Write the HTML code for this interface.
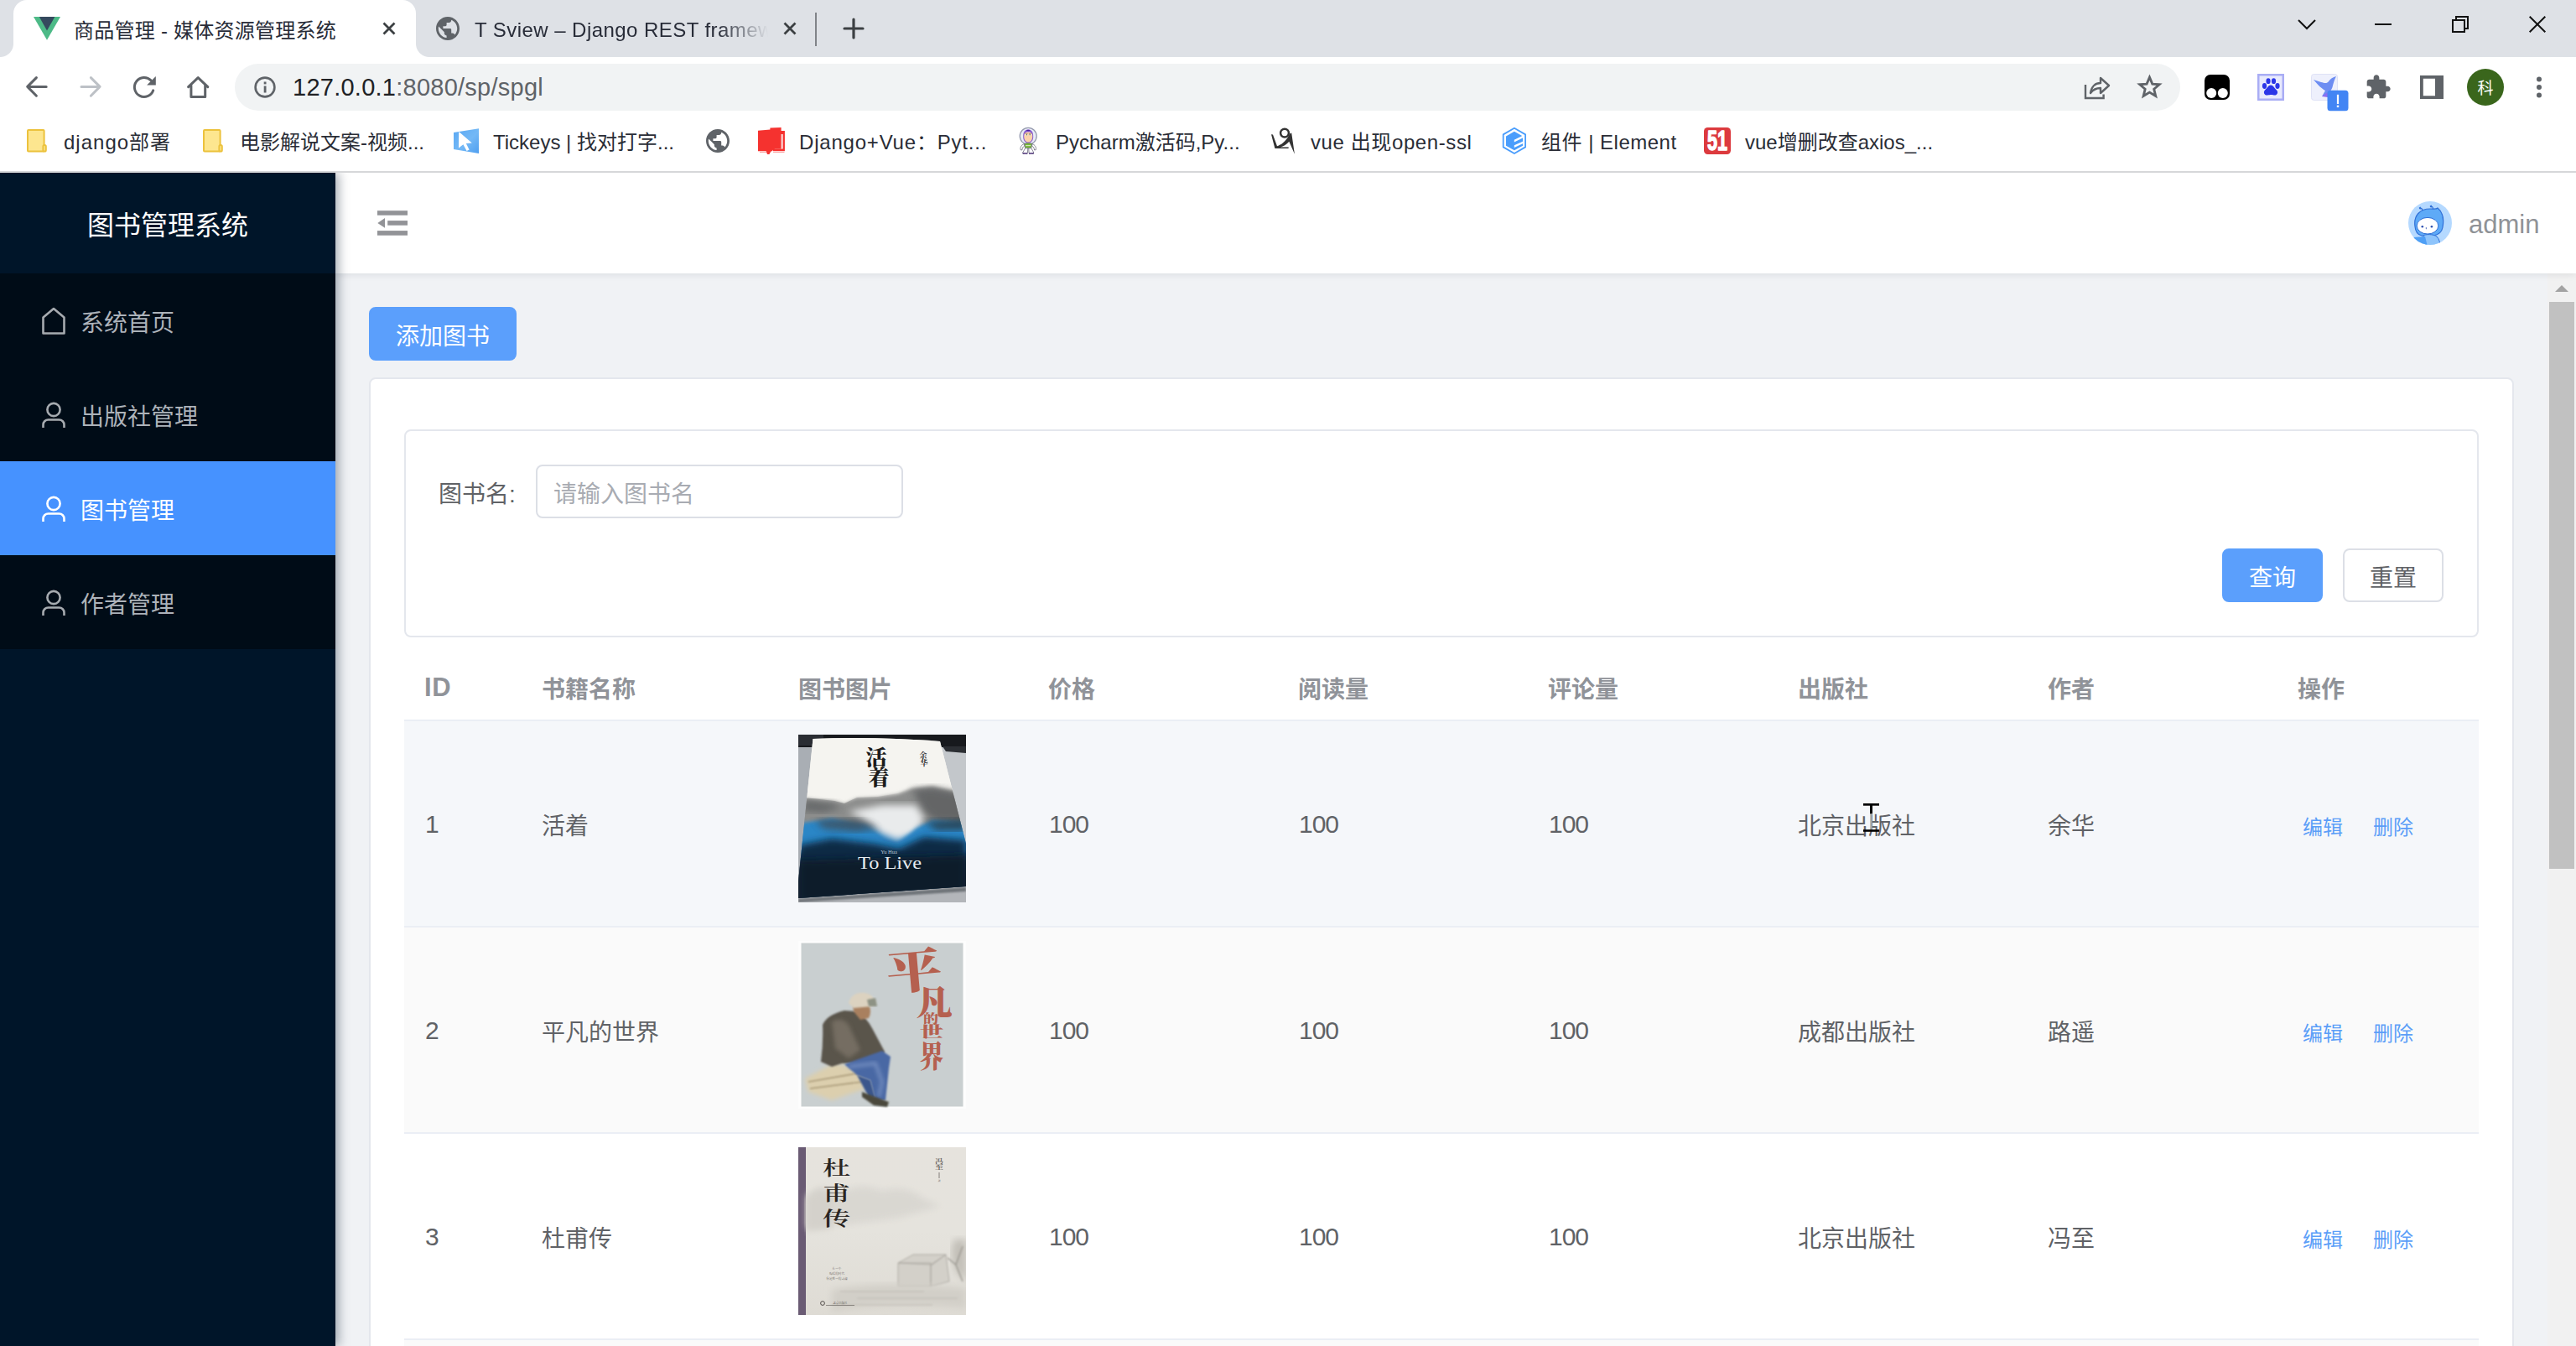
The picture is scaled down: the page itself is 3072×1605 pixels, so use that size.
<!DOCTYPE html>
<html lang="zh-CN">
<head>
<meta charset="utf-8">
<title>商品管理 - 媒体资源管理系统</title>
<style>
html,body{margin:0;padding:0}
body{width:3072px;height:1605px;overflow:hidden;position:relative;background:#fff;
 font-family:"Liberation Sans","Noto Sans CJK SC",sans-serif;color:#202124}
*{box-sizing:border-box}
.abs{position:absolute}
svg{display:block;overflow:visible}
/* ---------- browser chrome ---------- */
#tabstrip{position:absolute;left:0;top:0;width:3072px;height:68px;background:#dee1e6}
#tab1{position:absolute;left:16px;top:0;width:480px;height:68px;background:#fff;border-radius:16px 16px 0 0}
#tab1:before,#tab1:after{content:"";position:absolute;bottom:0;width:16px;height:16px}
#tab1:before{left:-16px;background:radial-gradient(circle at 0 0,rgba(255,255,255,0) 15.5px,#fff 16.5px)}
#tab1:after{right:-16px;background:radial-gradient(circle at 100% 0,rgba(255,255,255,0) 15.5px,#fff 16.5px)}
.tabtitle{position:absolute;top:20px;height:34px;line-height:34px;font-size:24px;letter-spacing:.25px;white-space:nowrap;color:#282c38}
#toolbar{position:absolute;left:0;top:68px;width:3072px;height:138px;background:#fff;border-bottom:2px solid #d6d7d9}
#omni{position:absolute;left:280px;top:76px;width:2320px;height:56px;border-radius:28px;background:#f1f3f4}
#url{position:absolute;left:349px;top:84px;height:40px;line-height:40px;font-size:29px;color:#5f6368;white-space:nowrap;letter-spacing:.25px}
#url b{font-weight:400;color:#202124}
.bm{position:absolute;top:153px;height:34px;line-height:34px;font-size:24px;white-space:nowrap;color:#2a2d36}
/* ---------- page ---------- */
#page{position:absolute;left:0;top:206px;width:3072px;height:1399px;background:#f0f2f5;overflow:hidden;
 font-family:"Liberation Sans","Noto Sans CJK SC",sans-serif}

#side{position:absolute;left:0;top:0;width:400px;height:1399px;background:#001529;box-shadow:4px 0 12px rgba(0,21,41,.35);z-index:5}
#logo{position:absolute;left:0;top:0;width:400px;height:120px;line-height:126px;text-align:center;color:#fff;font-size:32px}
#menu{position:absolute;left:0;top:120px;width:400px;height:448px;background:#000c17}
.mi{position:relative;height:112px;line-height:120px;color:#adb3ba;font-size:28px;padding-left:96px;white-space:nowrap}
.mi svg{position:absolute;left:46px;top:39px}
.mi.on{background:#4692ff;color:#fff}
#hdr{position:absolute;left:400px;top:0;width:2672px;height:120px;background:#fff;box-shadow:0 2px 8px rgba(0,21,41,.08);z-index:4}
#admin{position:absolute;left:2544px;top:42px;height:40px;line-height:40px;font-size:31px;color:#8f9297}
#main{position:absolute;left:400px;top:120px;width:2638px;height:1279px;background:#f0f2f5}
#sb{position:absolute;left:3038px;top:120px;width:34px;height:1279px;background:#f1f1f1}
#sb i{position:absolute;left:2px;top:34px;width:30px;height:676px;background:#c1c1c1}
.btn{position:absolute;height:64px;line-height:68px;border-radius:8px;font-size:28px;text-align:center;border:2px solid #5b9ffc;background:#5b9ffc;color:#fff;white-space:nowrap}
.btn.plain{background:#fff;border-color:#dcdfe6;color:#606266}
.card{position:absolute;background:#fff;border:2px solid #e4e7ed;border-radius:8px}
#lbl{position:absolute;left:523px;top:348px;height:64px;line-height:72px;font-size:28px;color:#606266;white-space:nowrap}
#inp{position:absolute;left:639px;top:348px;width:438px;height:64px;border:2px solid #dcdfe6;border-radius:8px;background:#fff;line-height:68px;padding-left:19px;font-size:28px;color:#a8abb2;white-space:nowrap}
.th{position:absolute;top:574px;height:78px;line-height:86px;font-size:28px;font-weight:700;color:#909399;white-space:nowrap}
.row{position:absolute;left:482px;width:2474px;height:246px;border-bottom:2px solid #ebeef5}
.td{position:absolute;top:0;height:244px;line-height:252px;font-size:28px;color:#606266;white-space:nowrap}
.td.n{line-height:245px;font-size:30px;letter-spacing:-1px;margin-left:1px}
.lk{position:absolute;top:0;height:250px;line-height:254px;font-size:24px;color:#5b9ef8;white-space:nowrap}
.cover{position:absolute;left:470px;top:16px;width:200px;height:200px;overflow:hidden}
</style>
</head>
<body>
<!-- ================= TAB STRIP ================= -->
<div id="tabstrip">
  <div id="tab1">
    <!-- vue logo -->
    <svg class="abs" style="left:24px;top:20px" width="32" height="28" viewBox="0 0 32 28">
      <polygon points="0,0 32,0 16,27.7" fill="#4dba87"/>
      <polygon points="6.8,0 25.4,0 16,16.5" fill="#35495e"/>
    </svg>
    <div class="tabtitle" style="left:72px">商品管理 - 媒体资源管理系统</div>
    <svg class="abs" style="left:440px;top:26px" width="16" height="16" viewBox="0 0 16 16"><path d="M1.5 1.5 L14.5 14.5 M14.5 1.5 L1.5 14.5" stroke="#3c4043" stroke-width="2.8" fill="none"/></svg>
  </div>
  <!-- tab 2 -->
  <svg class="abs" style="left:520px;top:20px" width="28" height="28" viewBox="2 2 20 20"><path d="M12 2C6.48 2 2 6.48 2 12s4.48 10 10 10 10-4.48 10-10S17.52 2 12 2zm-1 17.93c-3.95-.49-7-3.85-7-7.93 0-.62.08-1.21.21-1.79L9 15v1c0 1.1.9 2 2 2v1.93zm6.9-2.54c-.26-.81-1-1.39-1.9-1.39h-1v-3c0-.55-.45-1-1-1H8v-2h2c.55 0 1-.45 1-1V7h2c1.1 0 2-.9 2-2v-.41c2.93 1.19 5 4.06 5 7.41 0 2.08-.8 3.97-2.1 5.39z" fill="#5f6368"/></svg>
  <div class="tabtitle" style="left:566px;top:18.5px;letter-spacing:.45px;width:352px;overflow:hidden;-webkit-mask-image:linear-gradient(90deg,#000 0,#000 290px,transparent 350px);mask-image:linear-gradient(90deg,#000 0,#000 290px,transparent 350px)">T Sview – Django REST framework</div>
  <svg class="abs" style="left:934px;top:26px" width="16" height="16" viewBox="0 0 16 16"><path d="M1.5 1.5 L14.5 14.5 M14.5 1.5 L1.5 14.5" stroke="#3c4043" stroke-width="2.8" fill="none"/></svg>
  <div class="abs" style="left:972px;top:15px;width:2px;height:40px;background:#808388"></div>
  <svg class="abs" style="left:1006px;top:22px" width="24" height="24" viewBox="0 0 24 24"><path d="M12 1 V23 M1 12 H23" stroke="#3c4043" stroke-width="3.2" fill="none" stroke-linecap="round"/></svg>
  <!-- window controls -->
  <svg class="abs" style="left:2740px;top:23px" width="22" height="13" viewBox="0 0 22 13"><path d="M1 1 L11 11 L21 1" stroke="#111" stroke-width="2" fill="none"/></svg>
  <div class="abs" style="left:2832px;top:28px;width:20px;height:2px;background:#111"></div>
  <svg class="abs" style="left:2924px;top:19px" width="20" height="20" viewBox="0 0 20 20"><path d="M1 5 H15 V19 H1 Z M5 5 V1 H19 V15 H15" stroke="#111" stroke-width="2" fill="none"/></svg>
  <svg class="abs" style="left:3016px;top:19px" width="20" height="20" viewBox="0 0 20 20"><path d="M0.7 0.7 L19.3 19.3 M19.3 0.7 L0.7 19.3" stroke="#111" stroke-width="2" fill="none"/></svg>
</div>

<!-- ================= TOOLBAR ================= -->
<div id="toolbar"></div>
<!-- nav icons -->
<svg class="abs" style="left:31px;top:91px" width="26" height="26" viewBox="0 0 26 26"><path d="M12.4 1.6 L1.7 12.4 L12.4 23.2 M1.9 12.4 H24.2" stroke="#5f6368" stroke-width="3" fill="none" stroke-linecap="round" stroke-linejoin="round"/></svg>
<svg class="abs" style="left:96px;top:91px" width="26" height="26" viewBox="0 0 26 26"><path d="M12.4 1.6 L23.1 12.4 L12.4 23.2 M22.9 12.4 H1" stroke="#bdc1c6" stroke-width="3" fill="none" stroke-linecap="round" stroke-linejoin="round"/></svg>
<svg class="abs" style="left:158px;top:90px" width="28" height="28" viewBox="0 0 28 28"><path d="M24.74 17.84 A11.5 11.5 0 1 1 22.03 5.87" stroke="#5f6368" stroke-width="3" fill="none" stroke-linecap="round"/><path d="M27.8 0.9 V11.6 H17.1 Z" fill="#5f6368"/></svg>
<svg class="abs" style="left:222px;top:90px" width="28" height="28" viewBox="0 0 28 28"><path d="M2.6 13.6 L14.2 2.6 L25.8 13.6 M5.9 11.4 V25.4 H22.7 V11.4" stroke="#5f6368" stroke-width="3" fill="none" stroke-linecap="round" stroke-linejoin="round"/></svg>
<div id="omni"></div>
<svg class="abs" style="left:303px;top:91px" width="26" height="26" viewBox="0 0 26 26"><circle cx="13" cy="13" r="11.4" stroke="#5f6368" stroke-width="2.6" fill="none"/><rect x="11.7" y="11.5" width="2.8" height="8" fill="#5f6368"/><rect x="11.7" y="6.5" width="2.8" height="2.9" fill="#5f6368"/></svg>
<div id="url"><b>127.0.0.1</b>:8080/sp/spgl</div>
<!-- share -->
<svg class="abs" style="left:2485px;top:89px" width="32" height="30" viewBox="0 0 32 30"><path d="M2 12 V28 H23.6 V23.5" stroke="#5f6368" stroke-width="2.4" fill="none"/><path d="M8 22 C9 14 14 10 20 10 V4 L30 13 L20 22 V16 C15 16 11 18 8 22 Z" stroke="#5f6368" stroke-width="2.4" fill="none" stroke-linejoin="round"/></svg>
<!-- star -->
<svg class="abs" style="left:2550.4px;top:90.4px" width="26.9" height="26" viewBox="0 0 32 31"><path d="M16 2.5 L20 12 L30 12.8 L22.3 19.4 L24.7 29.3 L16 24 L7.3 29.3 L9.7 19.4 L2 12.8 L12 12 Z" stroke="#5f6368" stroke-width="3.4" fill="none" stroke-linejoin="miter"/></svg>
<!-- tampermonkey -->
<svg class="abs" style="left:2629px;top:89px" width="30" height="30" viewBox="0 0 30 30"><rect width="30" height="30" rx="7" fill="#000"/><circle cx="8.2" cy="22" r="6" fill="#fff"/><circle cx="21.8" cy="22" r="6" fill="#fff"/></svg>
<!-- baidu paw -->
<svg class="abs" style="left:2692px;top:88px" width="32" height="32" viewBox="0 0 32 32"><rect width="32" height="32" fill="#a9adf5"/><rect x="2.5" y="2.5" width="27" height="27" fill="#e8eafd"/><ellipse cx="8.5" cy="14.5" rx="2.6" ry="3.4" fill="#2b36e8"/><ellipse cx="13" cy="8.7" rx="2.6" ry="3.4" fill="#2b36e8"/><ellipse cx="19.5" cy="8.7" rx="2.6" ry="3.4" fill="#2b36e8"/><ellipse cx="24" cy="14.5" rx="2.6" ry="3.4" fill="#2b36e8"/><path d="M16 13.5 C19 13.5 20 17 23 19.5 C25.5 22 23.5 26 20 25.5 C18 25.2 17 25 16 25 C15 25 14 25.2 12 25.5 C8.5 26 6.5 22 9 19.5 C12 17 13 13.5 16 13.5 Z" fill="#2b36e8"/></svg>
<!-- bird ext -->
<svg class="abs" style="left:2756px;top:88px" width="46" height="46" viewBox="0 0 46 46"><rect x="0.5" y="0.5" width="31" height="31" rx="3" fill="#eef0fc" stroke="#dfe2f6"/><path d="M3 7 L12 10 C16 11 19 12 21 9 C23 6 26 4 30 3 C28 7 27 10 26 14 C25 20 20 25 13 27 L17 20 C13 18 9 14 3 7 Z" fill="#6d8df2"/><path d="M13 27 C16 24 20 22 24 21 L20 28 Z" fill="#8a6df0"/><rect x="19.5" y="19.8" width="25" height="24.5" rx="3.5" fill="#4285f4"/><rect x="30.9" y="24.8" width="2.2" height="11.2" fill="#fff"/><rect x="30.8" y="37.6" width="2.4" height="2.4" fill="#fff"/></svg>
<!-- puzzle -->
<svg class="abs" style="left:2820px;top:87.7px" width="32" height="32" viewBox="0 0 24 24"><path d="M20.5 11H19V7c0-1.1-.9-2-2-2h-4V3.5C13 2.12 11.88 1 10.5 1S8 2.12 8 3.5V5H4c-1.1 0-1.99.9-1.99 2v3.8H3.5c1.49 0 2.7 1.21 2.7 2.7s-1.21 2.7-2.7 2.7H2V20c0 1.1.9 2 2 2h3.8v-1.5c0-1.49 1.21-2.7 2.7-2.7 1.49 0 2.7 1.21 2.7 2.7V22H17c1.1 0 2-.9 2-2v-4h1.5c1.38 0 2.5-1.12 2.5-2.5S21.88 11 20.5 11z" fill="#5f6368"/></svg>
<!-- side panel -->
<svg class="abs" style="left:2886px;top:90px" width="28" height="28" viewBox="0 0 28 28"><path d="M0 0 H28 V28 H0 Z M3.8 3.8 V24.2 H18 V3.8 Z" fill="#5f6368" fill-rule="evenodd"/></svg>
<!-- avatar -->
<div class="abs" style="left:2942px;top:82px;width:44px;height:44px;border-radius:22px;background:#3a661c;color:#fff;font-size:19px;line-height:44px;text-align:center;font-family:'Noto Sans CJK SC',sans-serif">科</div>
<!-- menu dots -->
<svg class="abs" style="left:3024px;top:91px" width="8" height="26" viewBox="0 0 8 26"><circle cx="4" cy="3.5" r="3" fill="#5f6368"/><circle cx="4" cy="13" r="3" fill="#5f6368"/><circle cx="4" cy="22.5" r="3" fill="#5f6368"/></svg>

<!-- ================= BOOKMARKS ================= -->

<!-- folder 1 -->
<svg class="abs" style="left:32px;top:154px" width="24" height="28" viewBox="0 0 24 28"><rect x="1" y="1" width="19.6" height="25.5" rx="1" fill="#fde68f" stroke="#ecc23d" stroke-width="2"/><rect x="19.4" y="19" width="3.4" height="7.5" rx="1.6" fill="#fde68f" stroke="#ecc23d" stroke-width="2"/></svg>
<div class="bm" id="bm1" style="left:76px;letter-spacing:1px">django部署</div>
<!-- folder 2 -->
<svg class="abs" style="left:242px;top:154px" width="24" height="28" viewBox="0 0 24 28"><rect x="1" y="1" width="19.6" height="25.5" rx="1" fill="#fde68f" stroke="#ecc23d" stroke-width="2"/><rect x="19.4" y="19" width="3.4" height="7.5" rx="1.6" fill="#fde68f" stroke="#ecc23d" stroke-width="2"/></svg>
<div class="bm" id="bm2" style="left:286px">电影解说文案-视频...</div>
<!-- tickeys -->
<svg class="abs" style="left:540px;top:152px" width="32" height="32" viewBox="0 0 32 32"><defs><linearGradient id="tk" x1="0" y1="0" x2="1" y2="1"><stop offset="0" stop-color="#5aa8f3"/><stop offset=".55" stop-color="#73b8f6"/><stop offset="1" stop-color="#4f9ff0"/></linearGradient></defs><path d="M1 6 L31 1.2 V30.9 L1 26 Z" fill="url(#tk)"/><path d="M7.2 5 L22.8 18.4 L15.8 18.9 L19.6 26.4 L16.6 27.9 L12.4 20.2 L7 24.4 Z" fill="#fff"/></svg>
<div class="bm" id="bm3" style="left:588px">Tickeys | 找对打字...</div>
<!-- globe -->
<svg class="abs" style="left:842px;top:154px" width="28" height="28" viewBox="2 2 20 20"><path d="M12 2C6.48 2 2 6.48 2 12s4.48 10 10 10 10-4.48 10-10S17.52 2 12 2zm-1 17.93c-3.95-.49-7-3.85-7-7.93 0-.62.08-1.21.21-1.79L9 15v1c0 1.1.9 2 2 2v1.93zm6.9-2.54c-.26-.81-1-1.39-1.9-1.39h-1v-3c0-.55-.45-1-1-1H8v-2h2c.55 0 1-.45 1-1V7h2c1.1 0 2-.9 2-2v-.41c2.93 1.19 5 4.06 5 7.41 0 2.08-.8 3.97-2.1 5.39z" fill="#5f6368"/></svg>
<!-- red chat icon -->
<svg class="abs" style="left:903px;top:151px" width="34" height="34" viewBox="0 0 34 34"><rect x="19" y="5" width="13.9" height="24.2" fill="#f6302e"/><rect x="20.7" y="9" width="9.7" height="17.4" fill="#fff"/><rect x="29" y="9" width="1.6" height="17.4" fill="#fbd0cf"/><path d="M1 4.8 L15.4 3.4 V1.4 L28.6 1 V26.6 H19.6 L18 29.2 H1 Z" fill="#f5322f"/><path d="M10.6 29 L16.6 29 L14.4 33 L12 33 Z" fill="#f5322f"/><rect x="3" y="30" width="8" height="1" fill="#f9a5a3"/><rect x="19" y="30" width="13.5" height="1" fill="#f9a5a3"/></svg>
<div class="bm" id="bm5" style="left:953px;letter-spacing:.8px">Django+Vue：Pyt...</div>
<!-- buzz -->
<svg class="abs" style="left:1214px;top:151px" width="26" height="34" viewBox="0 0 26 34">
<circle cx="12.2" cy="11.3" r="10" fill="#e9ecf8" stroke="#9499ad" stroke-width="1.3"/>
<path d="M6.2 12 C6 5.5 9 3.6 12.2 3.6 C15.4 3.6 18.4 5.5 18.2 12 C18.4 16 16 19.6 12.2 19.6 C8.4 19.6 6 16 6.2 12 Z" fill="#8a5fd0"/>
<path d="M9.6 4.6 Q12.2 3 14.8 4.6 Q12.2 6 9.6 4.6 Z" fill="#4a1fa0"/>
<path d="M7.2 11 C7.4 7.4 9.6 6.4 12.2 6.4 C14.8 6.4 17 7.4 17.2 11 C17.4 15.4 15.4 18.6 12.2 18.6 C9 18.6 7 15.4 7.2 11 Z" fill="#fbd2ab"/>
<ellipse cx="10.2" cy="9.6" rx="1.5" ry="1.2" fill="#fff"/><ellipse cx="14.4" cy="9.6" rx="1.5" ry="1.2" fill="#fff"/>
<circle cx="10.4" cy="9.7" r=".8" fill="#5a6a3a"/><circle cx="14.2" cy="9.7" r=".8" fill="#5a6a3a"/>
<path d="M8.6 8.3 L11.6 8.6 M15.8 8.3 L12.8 8.6" stroke="#7a5a3a" stroke-width=".6"/>
<path d="M7.6 20.4 Q12.2 18.6 16.8 20.4 L15.8 25.6 H8.6 Z" fill="#78b83a" stroke="#5a5a6a" stroke-width=".7"/>
<path d="M9 22.6 H15.4" stroke="#d8e8c0" stroke-width="1"/>
<path d="M7.4 20.6 C4 21.6 2.4 25 3 27.6 L4.8 28 C5 25.6 6 24 7.8 23 Z M17 20.6 C20.4 21.6 22 25 21.4 27.6 L19.6 28 C19.4 25.6 18.4 24 16.6 23 Z" fill="#fff" stroke="#6a6a7a" stroke-width=".8"/>
<path d="M8.8 25.6 L11.8 25.6 L11.4 31.4 L6 32.4 L5.6 31 Z M12.8 25.6 L15.8 25.6 L18.8 31 L18.4 32.4 L13 31.4 Z" fill="#fff" stroke="#6a6a7a" stroke-width=".8"/>
<path d="M5.6 31.6 L11.4 32.2 M13 32.2 L18.8 31.6" stroke="#4a2a7a" stroke-width="1.2"/>
</svg>
<div class="bm" id="bm6" style="left:1259px">Pycharm激活码,Py...</div>
<!-- A icon -->
<svg class="abs" style="left:1515px;top:151px" width="32" height="34" viewBox="0 0 32 34"><circle cx="17" cy="7.6" r="4.9" fill="none" stroke="#333" stroke-width="2.5"/><path d="M1 9.2 L3 9.6 L8 23.2 C14.5 21.5 20 15.5 23 8.6 L25.2 7.6 L28.9 32.8 L22.3 17.8 C19 21.6 15.5 23.6 12 24.4 L21.8 24.5 L21.5 26 L5.4 26 Z" fill="#333"/></svg>
<div class="bm" id="bm7" style="left:1563px;letter-spacing:.6px">vue 出现open-ssl</div>
<!-- element icon -->
<svg class="abs" style="left:1791px;top:151px" width="30" height="34" viewBox="0 0 30 34"><path d="M14.9 1.8 L28.1 9.4 V24.4 L14.9 32 L1.7 24.4 V9.4 Z" fill="#fff" stroke="#4a9dfc" stroke-width="1.8" stroke-linejoin="round"/><path d="M14.9 5.8 L25 11.4 V22.8 L14.9 28.3 L5 22.8 V11.4 Z" fill="#4a9dfc"/><path d="M14.8 15.7 L25.4 10.4 V13.3 L14.8 18.4 Z M14.8 22.3 L25.4 17.4 V20.1 L14.8 24.9 Z" fill="#fff"/></svg>
<div class="bm" id="bm8" style="left:1838px;letter-spacing:.5px">组件 | Element</div>
<!-- 51 icon -->
<svg class="abs" style="left:2032px;top:152px" width="32" height="32" viewBox="0 0 32 32"><rect width="32" height="32" rx="4.5" fill="#dc3a3e"/><g transform="translate(16 27.4) scale(.66 1)"><text x="0" y="0" text-anchor="middle" font-family="Liberation Sans, sans-serif" font-weight="700" font-size="32.5" fill="#fff" stroke="#fff" stroke-width="1.5" stroke-linejoin="round">51</text></g></svg>
<div class="bm" id="bm9" style="left:2081px">vue增删改查axios_...</div>


<!-- ================= PAGE ================= -->
<div id="page">

<div id="side">
  <div id="logo">图书管理系统</div>
  <div id="menu">
    <div class="mi"><svg width="36" height="36" viewBox="0 0 36 36"><path d="M5.5 13.5 L18 3 L30.5 13.5 V32.5 H5.5 Z" fill="none" stroke="#a6abb0" stroke-width="2.6" stroke-linejoin="round"/></svg>系统首页</div>
    <div class="mi"><svg width="36" height="36" viewBox="0 0 36 36"><circle cx="18" cy="11.5" r="7.6" fill="none" stroke="#a6abb0" stroke-width="2.6"/><path d="M5.5 33 V29.5 a6 6 0 0 1 6 -6 H24.5 a6 6 0 0 1 6 6 V33" fill="none" stroke="#a6abb0" stroke-width="2.6"/></svg>出版社管理</div>
    <div class="mi on"><svg width="36" height="36" viewBox="0 0 36 36"><circle cx="18" cy="11.5" r="7.6" fill="none" stroke="#fff" stroke-width="2.6"/><path d="M5.5 33 V29.5 a6 6 0 0 1 6 -6 H24.5 a6 6 0 0 1 6 6 V33" fill="none" stroke="#fff" stroke-width="2.6"/></svg>图书管理</div>
    <div class="mi"><svg width="36" height="36" viewBox="0 0 36 36"><circle cx="18" cy="11.5" r="7.6" fill="none" stroke="#a6abb0" stroke-width="2.6"/><path d="M5.5 33 V29.5 a6 6 0 0 1 6 -6 H24.5 a6 6 0 0 1 6 6 V33" fill="none" stroke="#a6abb0" stroke-width="2.6"/></svg>作者管理</div>
  </div>
</div>
<div id="hdr">
  <!-- fold icon -->
  <svg class="abs" style="left:50px;top:45px" width="36" height="30" viewBox="0 0 36 30"><rect x="0" y="0.2" width="36" height="5.5" fill="#929397"/><rect x="12.2" y="12.1" width="23.8" height="5.6" fill="#929397"/><rect x="0" y="24.1" width="36" height="5.6" fill="#929397"/><path d="M0.3 14.9 L9 8.9 V20.8 Z" fill="#929397"/></svg>
  <!-- avatar -->
  <svg class="abs" style="left:2472px;top:34px" width="52" height="52" viewBox="0 0 52 52">
    <defs><clipPath id="avc"><circle cx="26" cy="26" r="26"/></clipPath></defs>
    <circle cx="26" cy="26" r="26" fill="#b5d9ff"/>
    <g clip-path="url(#avc)">
      <path d="M17 11 Q16.5 7.5 13 8 M13 8 l1.8 -1 M13 8 l1.6 1.4 M29.6 9.5 Q29.4 5.6 26 6 M26 6 l1.8 -1.1 M26 6 l1.6 1.4" stroke="#2f6fd6" stroke-width="1.2" fill="none"/>
      <path d="M8 30 C6 16 15 9 26 9 C30 9 33 10 35 8 C40 12 43 20 41 31 C40 37 36 40 30 41 L16 41 C11 40 8.5 36 8 30 Z" fill="#5eaaf7" stroke="#2f6fd6" stroke-width="1.2"/>
      <ellipse cx="23" cy="29.2" rx="12.8" ry="9.8" fill="#fff" stroke="#2f6fd6" stroke-width="1"/>
      <circle cx="16.8" cy="30.3" r="1.3" fill="#2a4fb0"/><circle cx="27.9" cy="30.3" r="1.3" fill="#2a4fb0"/><path d="M21.4 31.2 q-.8 1.4 .6 2" stroke="#2a4fb0" stroke-width=".9" fill="none"/>
      <path d="M18 41 C20 39 30 39 34 42 C37 45 38 50 38 54 H16 Z" fill="#8ec4fb" stroke="#2f6fd6" stroke-width="1"/>
      <path d="M6 43 L20 42 L23 54 H8 Z" fill="#4f9ff5"/>
    </g>
  </svg>
  <div id="admin">admin</div>
</div>
<div id="main"></div>
<div id="sb"><svg class="abs" style="left:9px;top:14px" width="16" height="8" viewBox="0 0 16 8"><path d="M0 8 L8 0 L16 8 Z" fill="#a3a3a3"/></svg><i></i></div>

<div class="btn" style="left:440px;top:160px;width:176px">添加图书</div>
<div class="card" style="left:440px;top:244px;width:2558px;height:1300px"></div>
<div class="card" style="left:482px;top:306px;width:2474px;height:248px"></div>
<div id="lbl">图书名:</div>
<div id="inp">请输入图书名</div>
<div class="btn" style="left:2650px;top:448px;width:120px">查询</div>
<div class="btn plain" style="left:2794px;top:448px;width:120px">重置</div>

<!-- table header -->
<div class="abs" style="left:482px;top:574px;width:2474px;height:80px;border-bottom:2px solid #ebeef5"></div>
<div class="th" style="left:506px;font-size:31px;line-height:80px;letter-spacing:.6px">ID</div>
<div class="th" style="left:646px">书籍名称</div>
<div class="th" style="left:952px">图书图片</div>
<div class="th" style="left:1250px">价格</div>
<div class="th" style="left:1548px">阅读量</div>
<div class="th" style="left:1846px">评论量</div>
<div class="th" style="left:2144px">出版社</div>
<div class="th" style="left:2442px">作者</div>
<div class="th" style="left:2740px">操作</div>

<!-- row 1 -->
<div class="row" style="top:654px;background:#f5f7fa">
  <div class="td n" style="left:24px">1</div><div class="td" style="left:164px">活着</div>
  <div class="cover" id="cv1"><svg width="200" height="200" viewBox="0 0 200 200">
<defs>
<filter id="f1"><feGaussianBlur stdDeviation="1"/></filter>
<filter id="f2"><feGaussianBlur stdDeviation="2.2"/></filter>
<filter id="f4"><feGaussianBlur stdDeviation="4"/></filter>
<clipPath id="bk1"><path d="M17.5 5 Q90 2 169 8 L200 130 V181 L0 195 V175 Z"/></clipPath>
<linearGradient id="bg1" x1="0" y1="0" x2="0" y2="1"><stop offset="0" stop-color="#f6f5f1"/><stop offset=".33" stop-color="#f3f2ee"/><stop offset=".42" stop-color="#9c9d9c"/><stop offset=".52" stop-color="#8e9498"/><stop offset=".6" stop-color="#2b7fbd"/><stop offset=".68" stop-color="#1f6ea8"/><stop offset=".76" stop-color="#0f3350"/><stop offset=".86" stop-color="#0a1b2b"/><stop offset="1" stop-color="#0b1622"/></linearGradient>
</defs>
<rect width="200" height="200" fill="#c3c7cb"/>
<rect x="0" y="0" width="17" height="200" fill="#a9aeb4"/>
<rect x="0" y="0" width="200" height="15" fill="#17191d"/>
<path d="M0 0 H30 V13 H0 Z" fill="#2a2d33"/>
<path d="M172 14 L200 14 V22 L176 20 Z" fill="#2b2e33"/>
<path d="M0 195 L200 181 V200 H0 Z" fill="#b3b6ba"/>
<path d="M0 196 L200 182 V187 L0 200 Z" fill="#6e7378" filter="url(#f1)"/>
<g clip-path="url(#bk1)">
<rect width="200" height="200" fill="url(#bg1)"/>
<path d="M0 0 H200 V62 L184 66 L160 61 L135 63 L119 70 L95 74 L70 75 L55 82 L43 79 L8 75 L0 76 Z" fill="#f5f4f0"/>
<path d="M8 76 L43 80 L55 83 L70 76 L95 75 L119 71 L135 64 L160 62 L184 67 L200 64 V108 L150 104 L110 96 L60 104 L0 108 Z" fill="#8c8d8c" filter="url(#f2)"/>
<path d="M136 66 L160 63 L184 68 L200 72 V106 L165 104 L150 92 Z" fill="#5d5f61" filter="url(#f4)" opacity=".85"/>
<path d="M8 78 L40 82 L52 87 L30 93 L5 91 Z" fill="#5d6062" filter="url(#f4)" opacity=".8"/>
<path d="M60 92 L100 84 L140 84 L150 100 L140 118 L118 126 L100 118 L84 104 Z" fill="#e9ebec" filter="url(#f4)"/>
<path d="M0 106 L40 100 L80 108 L104 126 L118 130 L140 112 L160 102 L200 104 V140 H0 Z" fill="#2a86c6" filter="url(#f2)"/>
<path d="M20 102 L70 100 L95 112 L70 116 L30 112 Z" fill="#3f4d58" filter="url(#f4)" opacity=".8"/>
<path d="M150 104 L200 100 V114 L165 114 Z" fill="#2c3c48" filter="url(#f4)" opacity=".85"/>
<path d="M0 132 L40 124 L90 130 L120 136 L150 122 L200 126 V200 H0 Z" fill="#0d2a44" filter="url(#f4)"/>
<path d="M0 150 L200 144 V200 H0 Z" fill="#0a1a29" filter="url(#f4)"/>
<text x="93" y="36" text-anchor="middle" font-family="'Noto Serif CJK SC',serif" font-weight="900" font-size="25" fill="#1c1c1c">活</text>
<text x="96" y="60" text-anchor="middle" font-family="'Noto Serif CJK SC',serif" font-weight="900" font-size="25" fill="#1c1c1c">着</text>
<text x="149" y="28" text-anchor="middle" font-family="'Noto Serif CJK SC',serif" font-weight="700" font-size="9" fill="#333">余</text>
<text x="150" y="37" text-anchor="middle" font-family="'Noto Serif CJK SC',serif" font-weight="700" font-size="9" fill="#333">华</text>
<text x="108" y="142" text-anchor="middle" font-family="'Liberation Serif',serif" font-size="6.5" fill="#b9c7d2">Yu Hua</text>
<text x="109" y="160" text-anchor="middle" font-family="'Liberation Serif',serif" font-size="20" fill="#e6ecf0" textLength="76" lengthAdjust="spacingAndGlyphs">To Live</text>
</g>
</svg></div>
  <div class="td n" style="left:768px">100</div><div class="td n" style="left:1066px">100</div><div class="td n" style="left:1364px">100</div>
  <div class="td" style="left:1662px">北京出版社</div><div class="td" style="left:1960px">余华</div>
  <div class="lk" style="left:2264px">编辑</div><div class="lk" style="left:2348px">删除</div>
</div>
<!-- row 2 -->
<div class="row" style="top:900px;background:#fafafa">
  <div class="td n" style="left:24px">2</div><div class="td" style="left:164px">平凡的世界</div>
  <div class="cover" id="cv2"><svg width="200" height="200" viewBox="0 0 200 200">
<defs><filter id="g1"><feGaussianBlur stdDeviation="1"/></filter><filter id="g2"><feGaussianBlur stdDeviation="2.5"/></filter></defs>
<rect width="200" height="200" fill="#fdfdfd"/>
<rect x="3.5" y="2.5" width="193" height="195" fill="#c9cfd0"/>
<path d="M8 164 L42 146 L72 152 L80 176 L40 190 L12 180 Z" fill="#dccfae" filter="url(#g2)"/>
<path d="M12 168 L70 158 M14 176 L76 168" stroke="#a99a78" stroke-width="1.6" filter="url(#g1)"/>
<path d="M29 100 Q34 88 55 83 L70 84 Q82 92 88 104 L103 132 L98 140 L78 146 L52 146 L40 150 L27 144 Q30 120 29 100 Z" fill="#5a544c" filter="url(#g1)"/>
<path d="M40 96 Q52 90 60 100 L74 130 L60 140 L44 128 Z" fill="#7b7367" filter="url(#g2)" opacity=".8"/>
<path d="M55 147 L100 131 L110 138 L108 152 L104 190 L92 190 L86 166 L70 160 Z" fill="#4a68a4" filter="url(#g1)"/><path d="M70 160 L86 166 L92 188 L84 186 Z" fill="#3b568c" filter="url(#g1)"/>
<path d="M60 150 L92 146 L100 168 L96 186" stroke="#7f98c8" stroke-width="3" fill="none" filter="url(#g2)"/>
<path d="M76 180 L92 186 L108 192 L106 198 L90 196 L76 186 Z" fill="#4b4a3e" filter="url(#g1)"/>
<path d="M66 84 Q64 74 72 72 L84 76 Q88 84 84 92 L74 94 Z" fill="#a9805f" filter="url(#g1)"/>
<path d="M60 74 Q64 60 80 62 Q90 64 92 74 L88 78 L66 80 Z" fill="#dcd2c0" filter="url(#g1)"/>
<path d="M82 70 L92 68 L94 78 L84 78 Z" fill="#8d9284" filter="url(#g1)"/>
<g font-family="'Noto Serif CJK SC',serif" font-weight="900" fill="#b5604f" text-anchor="middle">
<text transform="translate(140 56) rotate(-5) scale(1.16 .98)" x="0" y="0" font-size="57">平</text>
<text transform="translate(162 88) scale(1.08 1)" x="0" y="0" font-size="40">凡</text>
<text transform="translate(158 97.5) scale(1.25 1)" x="0" y="0" font-size="14.5">的</text>
<text transform="translate(159 115) scale(1.05 .66)" x="0" y="0" font-size="27">世</text>
<text transform="translate(159 151) scale(.95 1.22)" x="0" y="0" font-size="30">界</text>
</g>
</svg></div>
  <div class="td n" style="left:768px">100</div><div class="td n" style="left:1066px">100</div><div class="td n" style="left:1364px">100</div>
  <div class="td" style="left:1662px">成都出版社</div><div class="td" style="left:1960px">路遥</div>
  <div class="lk" style="left:2264px">编辑</div><div class="lk" style="left:2348px">删除</div>
</div>
<!-- row 3 -->
<div class="row" style="top:1146px;background:#fff">
  <div class="td n" style="left:24px">3</div><div class="td" style="left:164px">杜甫传</div>
  <div class="cover" id="cv3"><svg width="200" height="200" viewBox="0 0 200 200">
<defs><filter id="h1"><feGaussianBlur stdDeviation="1.2"/></filter><filter id="h3"><feGaussianBlur stdDeviation="4"/></filter>
<linearGradient id="bg3" x1="0" y1="0" x2="0" y2="1"><stop offset="0" stop-color="#e6e3dd"/><stop offset=".5" stop-color="#e5e3dd"/><stop offset="1" stop-color="#dedbd4"/></linearGradient></defs>
<rect width="200" height="200" fill="url(#bg3)"/>
<rect width="9" height="200" fill="#6a5b74"/>
<path d="M10 58 Q30 42 50 56 Q70 40 100 52 Q130 44 150 62 L170 70 L120 84 L60 92 L10 96 Z" fill="#d8d6d0" filter="url(#h3)" opacity=".9"/>
<path d="M10 60 L26 48 L40 60 L40 96 L10 100 Z" fill="#d4d1cb" filter="url(#h3)"/>
<path d="M119 138 L137 128 L176 128 L160 140 Z M119 138 H158 V166 H119 Z M158 140 L176 128 L180 160 L158 166 Z" fill="#d3d0c9" stroke="#a9a69f" stroke-width=".9" filter="url(#h1)"/>
<path d="M186 110 Q178 130 190 150 L200 160 V110 Z" fill="#c2bfb8" filter="url(#h3)"/>
<path d="M196 118 L188 140 L196 160 M188 140 L178 132" stroke="#9b9891" stroke-width="1.4" fill="none" filter="url(#h1)"/>
<path d="M40 170 Q100 158 200 168 V192 Q100 184 40 196 Z" fill="#d2cfc8" filter="url(#h3)"/>
<path d="M50 172 H150 M70 180 H190 M40 188 H160" stroke="#bdbab3" stroke-width="1" filter="url(#h1)"/>
<g font-family="'Noto Serif CJK SC',serif" font-weight="600" fill="#2a2522" text-anchor="middle" transform="scale(1,.68)">
<text x="45.5" y="49" font-size="33">杜</text><text x="45.5" y="92" font-size="33">甫</text><text x="45.5" y="136.5" font-size="33">传</text>
<text x="168" y="28" font-size="10" font-weight="500" fill="#4a4541">冯</text><text x="168" y="38" font-size="10" font-weight="500" fill="#4a4541">至</text>
<text x="168" y="60" font-size="4" font-weight="500" fill="#6a6561">著</text>
</g>
<rect x="167.6" y="30" width=".8" height="7" fill="#6a6561"/>
<g font-family="'Noto Serif CJK SC',serif" font-size="3.6" fill="#5a5551" text-anchor="middle"><text x="46" y="146">在一个</text><text x="46" y="152">晦暗的时代</text><text x="46" y="158">你是唯一的灵魂</text></g>
<circle cx="29" cy="186" r="2.4" fill="none" stroke="#44403c" stroke-width=".9"/>
<text x="50" y="187.3" font-family="'Noto Serif CJK SC',serif" font-size="3.4" fill="#44403c" text-anchor="middle">北京出版社</text>
<rect x="33" y="188.2" width="34" height=".5" fill="#44403c"/>
</svg></div>
  <div class="td n" style="left:768px">100</div><div class="td n" style="left:1066px">100</div><div class="td n" style="left:1364px">100</div>
  <div class="td" style="left:1662px">北京出版社</div><div class="td" style="left:1960px">冯至</div>
  <div class="lk" style="left:2264px">编辑</div><div class="lk" style="left:2348px">删除</div>
</div>
<!-- row 4 (cut off) -->
<div class="row" style="top:1392px;background:#fafafa"></div>
<!-- I-beam cursor -->
<svg class="abs" style="left:2222px;top:752px;z-index:9" width="19" height="34" viewBox="0 0 19 34"><rect x="0" y="0" width="19" height="2.7" fill="#000"/><rect x="8" y="0" width="3" height="12.5" fill="#000"/><rect x="8.4" y="12.5" width="2.2" height="19" fill="#a4a7ab"/><rect x="0" y="31.2" width="19" height="2.6" fill="#000"/></svg>

</div>
</body>
</html>
